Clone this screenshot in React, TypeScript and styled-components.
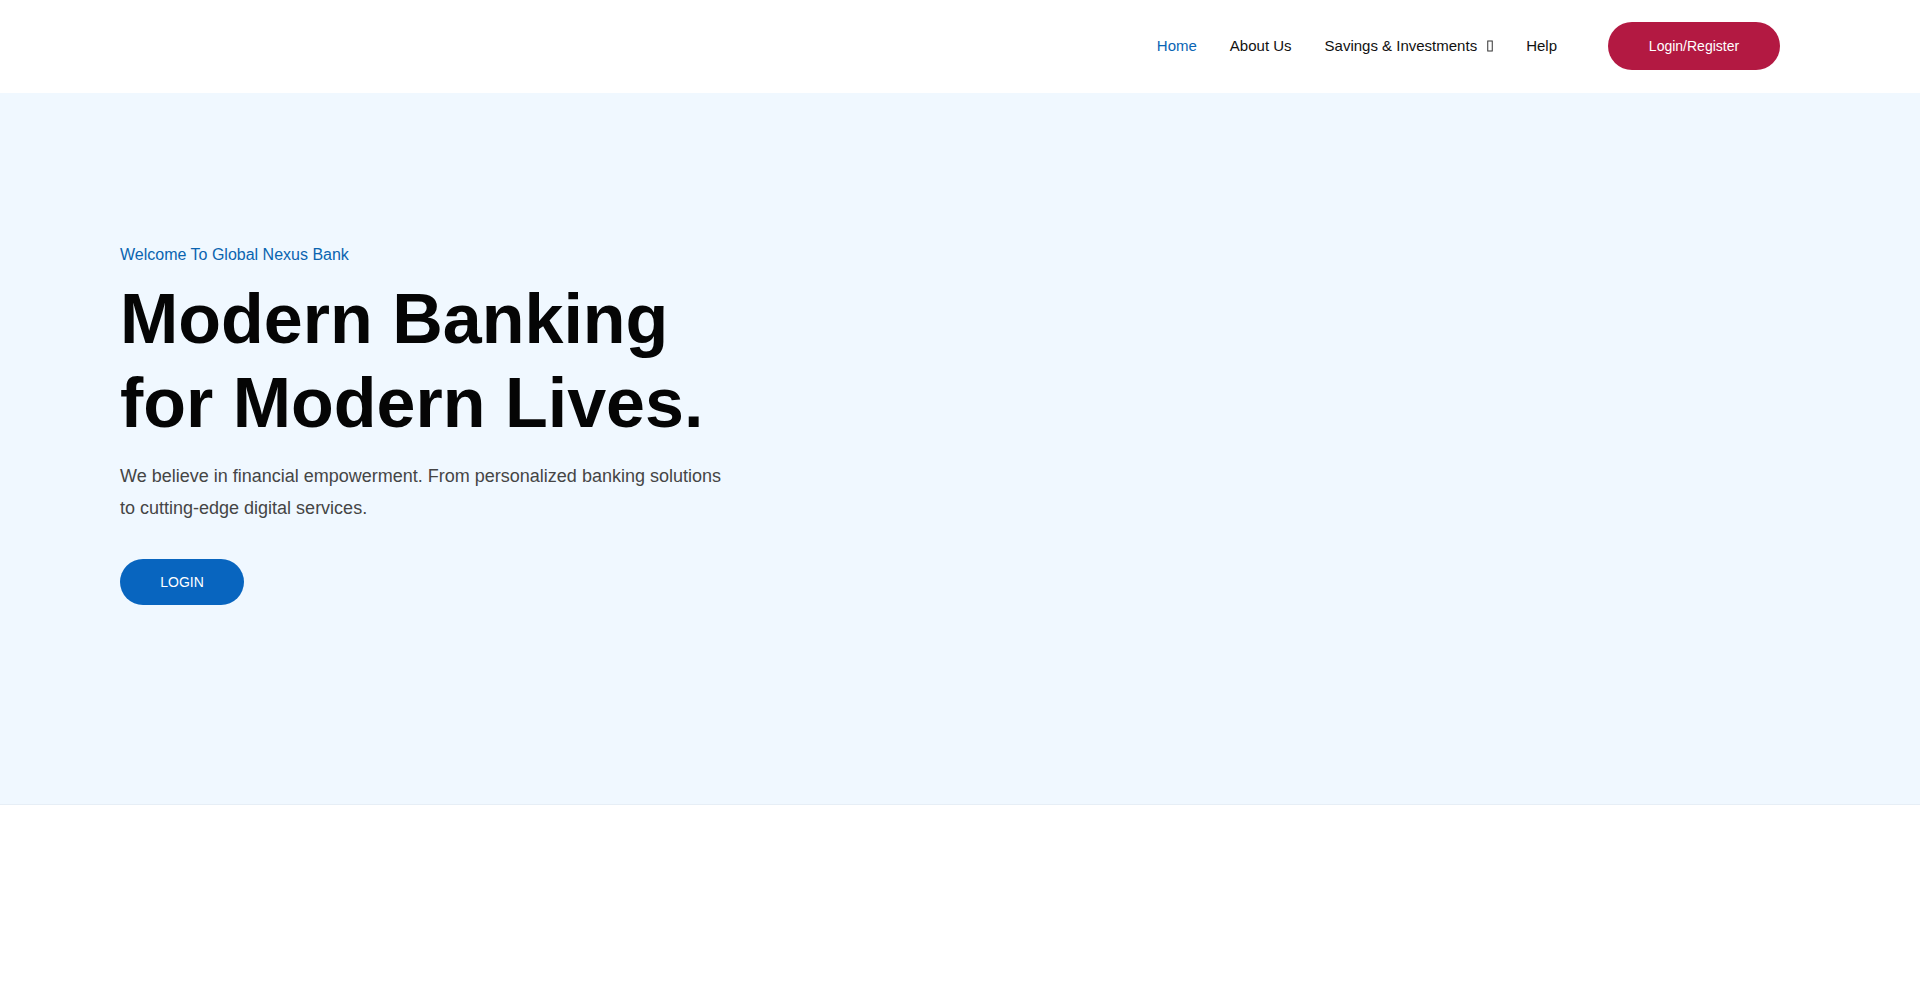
import React from 'react';
import styled, {createGlobalStyle} from 'styled-components';

const GlobalStyle = createGlobalStyle`
  html, body {
    margin: 0;
    padding: 0;
    background: #ffffff;
    font-family: "Liberation Sans", Arial, sans-serif;
  }
  * {
    box-sizing: border-box;
  }
`;

const Header = styled.header`
  display: flex;
  align-items: center;
  justify-content: flex-end;
  height: 93px;
  padding: 0 140px 2px 120px;
  background: #ffffff;
`;

const Nav = styled.nav`
  display: flex;
  align-items: center;
  margin-right: 51px;
`;

const NavLink = styled.a<{ $active?: boolean }>`
  display: flex;
  align-items: center;
  padding: 0 16.5px;
  font-size: 15px;
  line-height: 20px;
  color: ${(p) => (p.$active ? '#0a64b4' : '#111111')};
  text-decoration: none;
  cursor: pointer;
  &:first-child {
    padding-left: 0;
  }
  &:last-child {
    padding-right: 0;
  }
`;

const Caret = styled.svg`
  margin-left: 10px;
  width: 6px;
  height: 12px;
`;

const PillButton = styled.button<{ $tone: 'red' | 'blue' }>`
  display: inline-flex;
  align-items: center;
  justify-content: center;
  border: none;
  border-radius: 999px;
  font-family: "Liberation Sans", Arial, sans-serif;
  font-size: 14px;
  color: #ffffff;
  cursor: pointer;
  background: ${(p) => (p.$tone === 'red' ? '#b31942' : '#0865bf')};
`;

const RegisterButton = styled(PillButton)`
  width: 172px;
  height: 48px;
`;

const LoginButton = styled(PillButton)`
  width: 124px;
  height: 46px;
  margin-top: 35px;
`;

const Hero = styled.section`
  display: flex;
  flex-direction: column;
  align-items: flex-start;
  height: 712px;
  padding: 150px 120px 0;
  background: #f0f8ff;
  border-bottom: 1px solid #e6eef6;
`;

const Eyebrow = styled.p`
  margin: 0;
  font-size: 16px;
  line-height: 24px;
  color: #0a64b0;
`;

const Title = styled.h1`
  margin: 10px 0 0;
  font-size: 70px;
  line-height: 84px;
  font-weight: 700;
  color: #050505;
`;

const Lead = styled.p`
  margin: 15px 0 0;
  width: 612px;
  font-size: 18px;
  line-height: 32px;
  color: #454545;
`;

export default function App() {
  return (
    <>
      <GlobalStyle/>
      <Header>
        <Nav>
          <NavLink $active>Home</NavLink>
          <NavLink>About Us</NavLink>
          <NavLink>
            Savings &amp; Investments
            <Caret viewBox="0 0 6 12">
              <rect x="0.75" y="1" width="4.5" height="10" fill="none" stroke="#333" strokeWidth="1"/>
            </Caret>
          </NavLink>
          <NavLink>Help</NavLink>
        </Nav>
        <RegisterButton $tone="red">Login/Register</RegisterButton>
      </Header>
      <Hero>
        <Eyebrow>Welcome To Global Nexus Bank</Eyebrow>
        <Title>Modern Banking<br/>for Modern Lives.</Title>
        <Lead>
          We believe in financial empowerment. From personalized banking solutions to cutting-edge digital services.
        </Lead>
        <LoginButton $tone="blue">LOGIN</LoginButton>
      </Hero>
    </>
  );
}
